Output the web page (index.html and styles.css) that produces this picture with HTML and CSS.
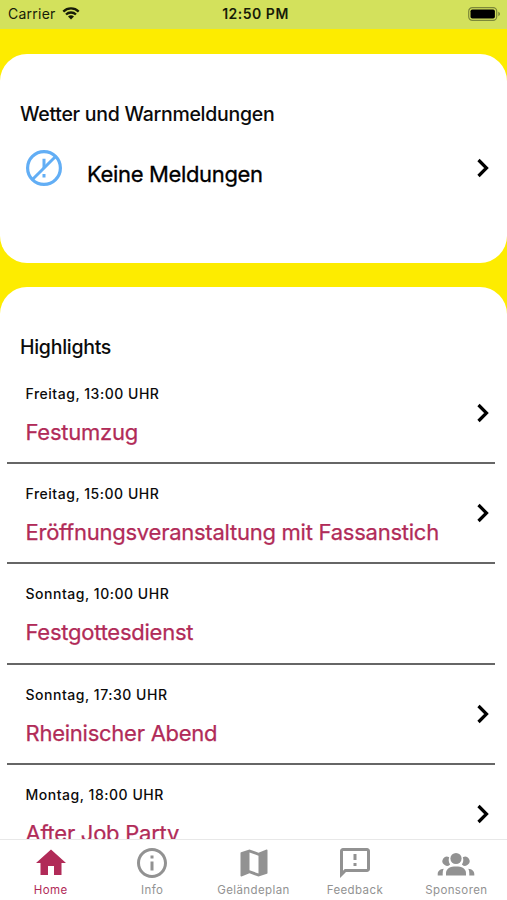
FILE: index.html
```html
<!DOCTYPE html>
<html lang="de">
<head>
  <meta charset="UTF-8">
  <meta name="viewport" content="width=device-width, initial-scale=1.0">
  <title>Highlights</title>
  <link rel="stylesheet" href="styles.css">
</head>
<body>
  <!-- Status bar -->
  <header class="status-bar">
    <div class="carrier">
      <span>Carrier</span>
      <svg class="wifi" viewBox="0 0 18 13">
        <path d="M1.3 4.6a11 11 0 0 1 15.4 0M4 7.5a7.2 7.2 0 0 1 10 0" fill="none" stroke="#171c08" stroke-width="2.3"/>
        <path d="M6 9.6a4.4 4.4 0 0 1 6 0L9 12.6z" fill="#171c08"/>
      </svg>
    </div>
    <div class="time">12:50 PM</div>
    <div class="battery-wrap">
      <svg class="battery" viewBox="0 0 33 14">
        <rect x=".7" y=".7" width="28" height="12.6" rx="3.6" fill="none" stroke="#7c8839" stroke-width="1.2"/>
        <rect x="2.5" y="2.5" width="24.4" height="9" rx="1.8" fill="#000"/>
        <path d="M30.3 4.8v4.4c1-.4 1.7-1.2 1.7-2.2s-.7-1.8-1.7-2.2z" fill="#7c8839"/>
      </svg>
    </div>
  </header>

  <main class="content">
    <section class="card weather">
      <h2>Wetter und Warnmeldungen</h2>
      <div class="message">
        <svg class="no-alert" viewBox="0 0 38 38" fill="none" stroke="#62aef5">
          <circle cx="19" cy="19" r="16.4" stroke-width="3.2"/>
          <path d="M7.7 30.3 30.3 7.7" stroke-width="3"/>
          <path d="M19 9.7v9.3M19 25v3.6" stroke-width="3"/>
        </svg>
        <span class="message-text">Keine Meldungen</span>
        <svg class="chevron" viewBox="0 0 14 20"><path d="M2.500 2l8 8-8 8"/></svg>
      </div>
    </section>

    <section class="card highlights">
      <h2>Highlights</h2>
      <ul class="events">
        <li class="event">
          <div>
            <p class="date">Freitag, 13:00 UHR</p>
            <p class="name">Festumzug</p>
          </div>
          <svg class="chevron" viewBox="0 0 14 20"><path d="M2.500 2l8 8-8 8"/></svg>
        </li>
        <li class="event">
          <div>
            <p class="date">Freitag, 15:00 UHR</p>
            <p class="name">Eröffnungsveranstaltung mit Fassanstich</p>
          </div>
          <svg class="chevron" viewBox="0 0 14 20"><path d="M2.500 2l8 8-8 8"/></svg>
        </li>
        <li class="event">
          <div>
            <p class="date">Sonntag, 10:00 UHR</p>
            <p class="name">Festgottesdienst</p>
          </div>
        </li>
        <li class="event">
          <div>
            <p class="date">Sonntag, 17:30 UHR</p>
            <p class="name">Rheinischer Abend</p>
          </div>
          <svg class="chevron" viewBox="0 0 14 20"><path d="M2.500 2l8 8-8 8"/></svg>
        </li>
        <li class="event">
          <div>
            <p class="date">Montag, 18:00 UHR</p>
            <p class="name">After Job Party</p>
          </div>
          <svg class="chevron" viewBox="0 0 14 20"><path d="M2.500 2l8 8-8 8"/></svg>
        </li>
      </ul>
    </section>
  </main>

  <!-- Bottom navigation -->
  <nav class="tabs">
    <a class="tab active">
      <svg viewBox="0 0 24 24"><path d="M10 20v-6h4v6h5v-8h3L12 3 2 12h3v8z"/></svg>
      <span>Home</span>
    </a>
    <a class="tab">
      <svg viewBox="0 0 24 24"><path d="M11 7h2v2h-2zm0 4h2v6h-2zm1-9C6.480 2 2 6.480 2 12s4.480 10 10 10 10-4.480 10-10S17.520 2 12 2zm0 18c-4.410 0-8-3.590-8-8s3.590-8 8-8 8 3.590 8 8-3.590 8-8 8z"/></svg>
      <span>Info</span>
    </a>
    <a class="tab">
      <svg viewBox="0 0 24 24"><path d="M20.500 3l-.16.030L15 5.100 9 3 3.360 4.900c-.21.070-.36.250-.36.480V20.500c0 .28.220.5.500.5l.16-.03L9 18.900l6 2.100 5.640-1.900c.21-.07.360-.25.360-.48V3.500c0-.28-.22-.5-.5-.5zM15 19l-6-2.110V5l6 2.110V19z"/></svg>
      <span>Geländeplan</span>
    </a>
    <a class="tab">
      <svg viewBox="0 0 24 24"><path d="M20 2H4c-1.100 0-1.990.9-1.990 2L2 22l4-4h14c1.100 0 2-.9 2-2V4c0-1.100-.9-2-2-2zm0 14H5.170L4 17.170V4h16v12zM11 12h2v2h-2zm0-6h2v4h-2z"/></svg>
      <span>Feedback</span>
    </a>
    <a class="tab">
      <svg class="group" viewBox="0 0 38 36">
        <circle cx="19" cy="13.500" r="5.600"/>
        <path d="M9 30.500v-2.200c0-4.800 4.300-6.700 10-6.700s10 1.900 10 6.700v2.200z"/>
        <path d="M12.200 12.300a4.500 4.500 0 1 0 .9 7.100 8 8 0 0 1-.9-7.100zM25.800 12.300a4.500 4.500 0 1 1-.9 7.100 8 8 0 0 0 .9-7.100z"/>
        <path d="M.7 30.500v-1.400c0-3 2.200-5 6-5.300-.7 1.200-1 2.700-1 4.500v2.200zM37.300 30.500v-1.400c0-3-2.200-5-6-5.300.7 1.200 1 2.700 1 4.500v2.200z"/>
      </svg>
      <span>Sponsoren</span>
    </a>
  </nav>
</body>
</html>
```
FILE: styles.css
```css
* {
  box-sizing: border-box;
}

body {
  margin: 0;
  height: 100vh;
  display: flex;
  flex-direction: column;
  overflow: hidden;
  background-color: #fdec00;
  color: #0b0b0b;
  font-family: Inter, 'Liberation Sans', sans-serif;
}

h2, p, ul {
  margin: 0;
  padding: 0;
}

/* Status bar */
.status-bar {
  flex: none;
  display: flex;
  align-items: center;
  height: 29px;
  padding: 0 6px 2px 8px;
  background-color: #d3e15c;
  color: #171c08;
  font-size: 14px;
  line-height: 17px;
}

.carrier, .battery-wrap {
  flex: 1;
  display: flex;
  align-items: center;
}

.carrier {
  gap: 6px;
  letter-spacing: 0.25px;
}

.wifi {
  width: 18px;
  height: 13px;
}

.time {
  padding-left: 2px;
  font-weight: 600;
  letter-spacing: 0.5px;
}

.battery-wrap {
  justify-content: flex-end;
}

.battery {
  width: 33px;
  height: 14px;
}

/* Cards */
.content {
  flex: 1;
  min-height: 0;
  overflow: hidden;
  padding-top: 24.500px;
}

.card {
  background-color: #fff;
  border-radius: 27px;
  padding-top: 47px;
  margin-bottom: 24.500px;
}

.weather {
  height: 209px;
}

.card h2 {
  padding-left: 20px;
  font-size: 19.500px;
  font-weight: 500;
  line-height: 26px;
  letter-spacing: -0.28px;
}

.message {
  display: flex;
  align-items: center;
  height: 60px;
  margin-top: 11px;
  padding: 0 17px 0 25px;
}

.no-alert {
  width: 38px;
  height: 38px;
}

.message-text {
  flex: 1;
  padding: 12px 0 0 24px;
  color: #000;
  font-size: 22px;
  font-weight: 400;
  letter-spacing: -0.35px;
  -webkit-text-stroke: 0.3px;
}

.chevron {
  flex: none;
  width: 14px;
  height: 20px;
  fill: none;
  stroke: #000;
  stroke-width: 3.200;
}

/* Highlight list */
.events {
  list-style: none;
  padding: 4px 12px 0 7px;
}

.event {
  display: flex;
  justify-content: space-between;
  align-items: center;
  height: 100.200px;
  padding: 0 5px 0 18.500px;
  border-bottom: 2px solid #666;
}

.date {
  padding-top: 6px;
  font-size: 14px;
  font-weight: 500;
  line-height: 20px;
  letter-spacing: 0.52px;
}

.name {
  padding-top: 12px;
  color: #b12b58;
  font-size: 22px;
  font-weight: 400;
  line-height: 32px;
  letter-spacing: -0.25px;
  -webkit-text-stroke: 0.25px;
}

/* Tabs */
.tabs {
  flex: none;
  display: flex;
  height: 61.500px;
  background-color: #fff;
  border-top: 1.500px solid #e8e8e8;
}

.tab {
  flex: 1;
  display: flex;
  flex-direction: column;
  align-items: center;
  padding-top: 5.500px;
  color: #929292;
  font-size: 11.500px;
  line-height: 18px;
  letter-spacing: 0.4px;
}

.tab svg {
  width: 36px;
  height: 36px;
  fill: currentColor;
}

.tab .group {
  width: 38px;
}

.tab.active {
  color: #b12b58;
}
```
